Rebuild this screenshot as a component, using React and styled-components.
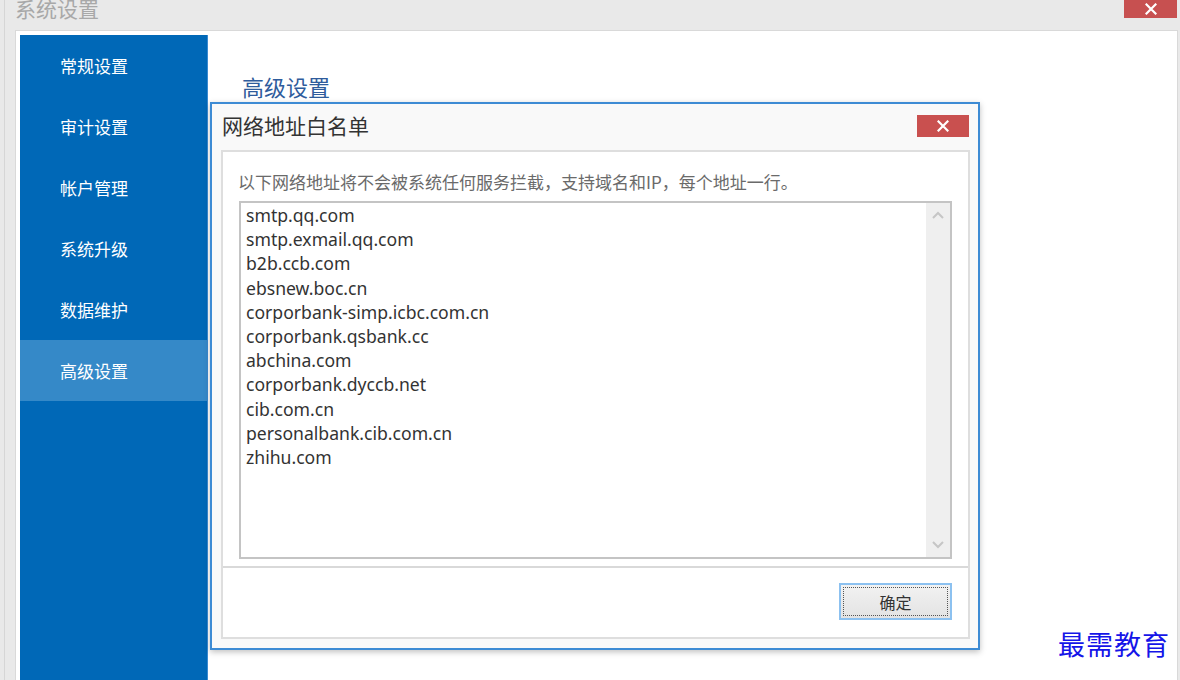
import React from "react";
import styled, { createGlobalStyle } from "styled-components";

const GlobalStyle = createGlobalStyle`
  html, body {
    margin: 0;
    padding: 0;
    background: #e9e9e9;
    font-family: "Noto Sans", "Noto Sans CJK SC", sans-serif;
  }
  * { box-sizing: border-box; }
`;

const menu = ["常规设置", "审计设置", "帐户管理", "系统升级", "数据维护", "高级设置"];

const hosts = [
  "smtp.qq.com",
  "smtp.exmail.qq.com",
  "b2b.ccb.com",
  "ebsnew.boc.cn",
  "corporbank-simp.icbc.com.cn",
  "corporbank.qsbank.cc",
  "abchina.com",
  "corporbank.dyccb.net",
  "cib.com.cn",
  "personalbank.cib.com.cn",
  "zhihu.com",
];

function CloseX({ size = 12 }) {
  return (
    <svg width={size} height={size} viewBox="0 0 12 12">
      <path d="M1.5 1.5 L10.5 10.5 M10.5 1.5 L1.5 10.5" stroke="#fff" strokeWidth="2.2" strokeLinecap="square" />
    </svg>
  );
}

function Chevron({ up }) {
  return (
    <svg width="12" height="8" viewBox="0 0 12 8">
      <path
        d={up ? "M1 7 L6 2 L11 7" : "M1 1 L6 6 L11 1"}
        fill="none"
        stroke="#c6c6c6"
        strokeWidth="2"
      />
    </svg>
  );
}

export default function App() {
  return (
    <>
      <GlobalStyle />
      <Window>
        <TitleBar>
          <WinTitle>系统设置</WinTitle>
          <WinClose>
            <CloseX size={12} />
          </WinClose>
        </TitleBar>
        <Panel>
          <Sidebar>
            {menu.map((m) => (
              <MenuItem key={m} $active={m === "高级设置"}>
                {m}
              </MenuItem>
            ))}
          </Sidebar>
          <Content>
            <Heading>高级设置</Heading>
          </Content>
        </Panel>

        <Dialog>
          <DialogHead>
            <DialogTitle>网络地址白名单</DialogTitle>
            <DialogClose>
              <CloseX size={12} />
            </DialogClose>
          </DialogHead>
          <DialogBody>
            <Hint>以下网络地址将不会被系统任何服务拦截，支持域名和IP，每个地址一行。</Hint>
            <ListBox>
              <HostList>
                {hosts.map((h) => (
                  <Host key={h}>{h}</Host>
                ))}
              </HostList>
              <ScrollTrack>
                <Chevron up />
                <Chevron />
              </ScrollTrack>
            </ListBox>
            <Footer>
              <OkButton>
                <FocusRing>确定</FocusRing>
              </OkButton>
            </Footer>
          </DialogBody>
        </Dialog>

        <Watermark>最需教育</Watermark>
      </Window>
    </>
  );
}

const Window = styled.div`
  position: relative;
  width: 1176px;
  height: 680px;
  margin-left: 4px;
  overflow: hidden;
  display: flex;
  flex-direction: column;
  padding: 0 2px 0 10px;
  border-left: 1px solid #d6d6d6;
`;

const TitleBar = styled.div`
  height: 30px;
  display: flex;
  align-items: flex-start;
  justify-content: space-between;
`;

const WinTitle = styled.div`
  font-family: "Noto Sans CJK SC", sans-serif;
  font-size: 21px;
  line-height: 22px;
  margin-top: -3px;
  color: #a8a8a8;
`;

const WinClose = styled.div`
  width: 53px;
  height: 18px;
  background: #c75050;
  display: flex;
  align-items: center;
  justify-content: center;
  margin-right: 1px;
`;

const Panel = styled.div`
  flex: 1;
  display: flex;
  background: #fff;
  border: 1px solid #d9d9d9;
  border-bottom: none;
  padding: 4px 0 0 4px;
`;

const Sidebar = styled.div`
  width: 188px;
  background: #0068b7;
  border-right: 1px solid #3b8ad0;
  display: flex;
  flex-direction: column;
`;

const MenuItem = styled.div`
  height: 61px;
  display: flex;
  align-items: center;
  padding-left: 40px;
  font-family: "Noto Sans CJK SC", sans-serif;
  font-size: 17px;
  color: #fff;
  background: ${(p) => (p.$active ? "#3589c8" : "transparent")};
`;

const Content = styled.div`
  flex: 1;
  padding: 37px 0 0 34px;
`;

const Heading = styled.div`
  font-family: "Noto Sans CJK SC", sans-serif;
  font-size: 22px;
  line-height: 28px;
  color: #2f5c9c;
`;

const Dialog = styled.div`
  position: absolute;
  left: 205px;
  top: 102px;
  width: 770px;
  height: 548px;
  background: #f9f9f9;
  border: 2px solid #3d8bd4;
  box-shadow: 0 2px 6px rgba(0, 0, 0, 0.25);
  display: flex;
  flex-direction: column;
  padding: 0 8px 9px 9px;
`;

const DialogHead = styled.div`
  height: 46px;
  display: flex;
  align-items: center;
  justify-content: space-between;
  padding: 0 0 2px 1px;
`;

const DialogTitle = styled.div`
  font-family: "Noto Sans CJK SC", sans-serif;
  font-size: 21px;
  color: #333;
  margin-top: -2px;
`;

const DialogClose = styled.div`
  width: 52px;
  height: 22px;
  background: #c9504f;
  display: flex;
  align-items: center;
  justify-content: center;
  margin-right: 1px;
  margin-top: -1px;
`;

const DialogBody = styled.div`
  flex: 1;
  background: #fff;
  border: 2px solid #dedede;
  display: flex;
  flex-direction: column;
`;

const Hint = styled.div`
  font-family: "Noto Sans CJK SC", sans-serif;
  font-size: 17px;
  line-height: 20px;
  color: #6a6a6a;
  padding: 20px 0 0 15px;
  height: 49px;
`;

const ListBox = styled.div`
  margin: 0 16px 0 16px;
  height: 358px;
  border: 2px solid #c4c4c4;
  display: flex;
`;

const HostList = styled.div`
  flex: 1;
  padding: 0 0 0 5px;
`;

const Host = styled.div`
  font-family: "Noto Sans", "Noto Sans CJK SC", sans-serif;
  font-size: 17.6px;
  line-height: 24.2px;
  color: #333;
`;

const ScrollTrack = styled.div`
  width: 24px;
  background: #efefef;
  display: flex;
  flex-direction: column;
  align-items: center;
  justify-content: space-between;
  padding: 8px 0 8px;
`;

const Footer = styled.div`
  flex: 1;
  margin-top: 7px;
  border-top: 2px solid #d9d9d9;
  display: flex;
  justify-content: flex-end;
  align-items: flex-start;
  padding: 15px 16px 0 0;
`;

const OkButton = styled.div`
  width: 113px;
  height: 37px;
  border: 2px solid #8cc1f0;
  background: linear-gradient(#f2f2f2, #e3e3e3);
  padding: 2px;
`;

const FocusRing = styled.div`
  height: 100%;
  border: 1px dotted #555;
  display: flex;
  align-items: center;
  justify-content: center;
  font-family: "Noto Sans CJK SC", sans-serif;
  font-size: 16px;
  color: #333;
`;

const Watermark = styled.div`
  position: absolute;
  right: 10px;
  bottom: 17px;
  font-family: "AR PL UKai CN", "Noto Sans CJK SC", serif;
  font-size: 27px;
  letter-spacing: 1px;
  color: #1515e8;
`;
